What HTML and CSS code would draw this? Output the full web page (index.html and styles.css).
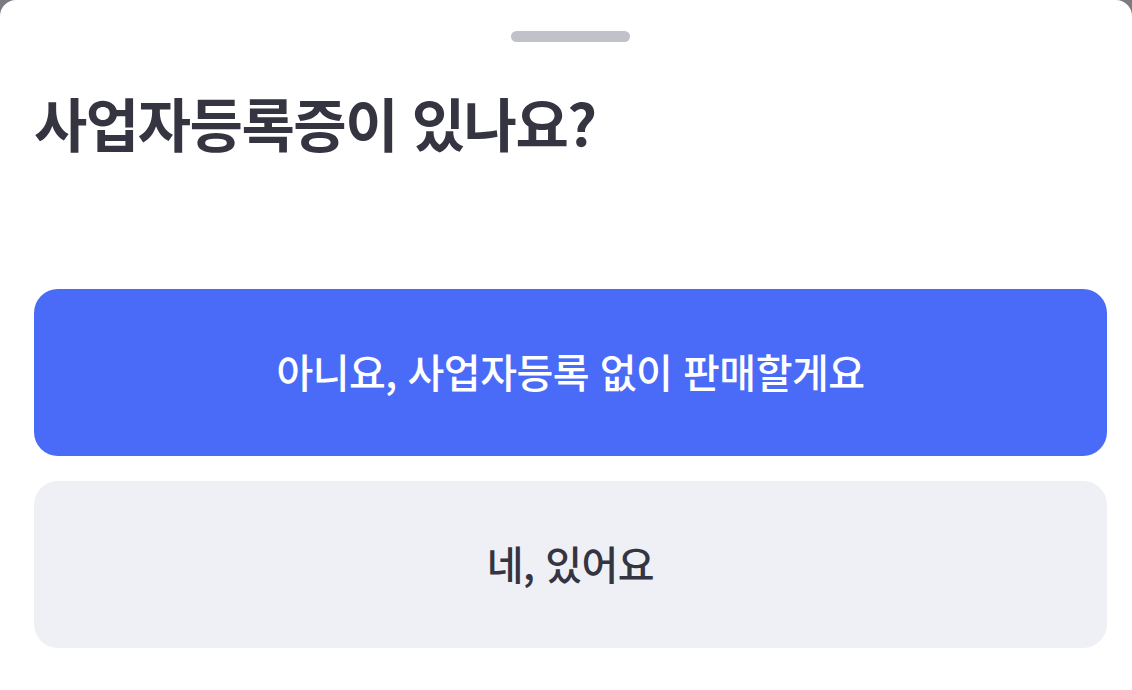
FILE: index.html
```html
<!DOCTYPE html>
<html lang="ko">
<head>
<meta charset="utf-8">
<link rel="stylesheet" href="styles.css">
</head>
<body>
<div class="sheet">
  <div class="handle"></div>
  <h1 class="title">사업자등록증이 있나요?</h1>
  <div class="actions">
    <button class="btn btn-primary">아니요, 사업자등록 없이 판매할게요</button>
    <button class="btn btn-secondary">네, 있어요</button>
  </div>
</div>
</body>
</html>
```

FILE: styles.css
```css
html, body {
  margin: 0;
  padding: 0;
  background: #7a7a80;
  width: 1132px;
  height: 690px;
  overflow: hidden;
}
.sheet {
  background: #ffffff;
  width: 1132px;
  height: 690px;
  border-radius: 16px 16px 0 0;
  box-sizing: border-box;
  padding: 31px 25px 0 34px;
  display: flex;
  flex-direction: column;
  font-family: "Noto Sans CJK KR", "Noto Sans", sans-serif;
}
.handle {
  align-self: center;
  width: 119px;
  height: 11px;
  border-radius: 6px;
  background: #c0c1c9;
}
.title {
  margin: 40px 0 0 0;
  font-size: 58px;
  line-height: 80px;
  font-weight: 700;
  color: #353542;
  letter-spacing: -1.5px;
}
.actions {
  margin-top: 127px;
  display: flex;
  flex-direction: column;
  gap: 25px;
}
.btn {
  border: none;
  height: 167px;
  border-radius: 24px;
  font-family: "Noto Sans CJK KR", "Noto Sans", sans-serif;
  font-size: 40px;
  font-weight: 500;
  letter-spacing: -0.5px;
  padding: 0 0 4px 0;
}
.btn-primary {
  background: #4a6bf7;
  color: #ffffff;
}
.btn-secondary {
  background: #eff0f5;
  color: #353542;
}
```
